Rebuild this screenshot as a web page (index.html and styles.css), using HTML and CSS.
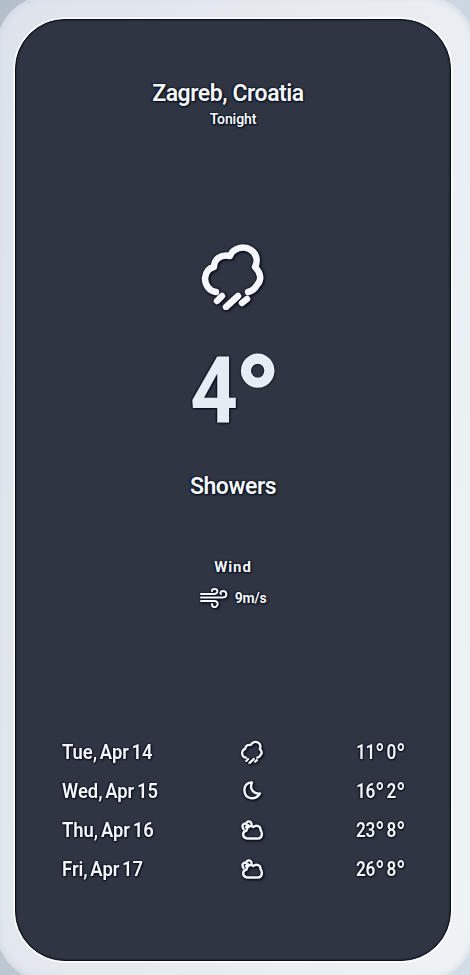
FILE: index.html
```html
<!DOCTYPE html>
<html lang="en">
<head>
<meta charset="utf-8">
<title>Weather</title>
<link rel="stylesheet" href="styles.css">
</head>
<body>
<svg width="0" height="0" class="defs">
  <symbol id="shower" viewBox="0 0 64 68">
    <path d="M15 50C8 49 4 43 4 36C5 29 8 26 13 25C13 17 20 12 29 14C32 6 43 3 50 8C56 12 57 19 54 25C60 31 61 38 56 43C54 47 51 49 47 50M21 54L16 59M37 54L25 65M46 57L41 61"/>
  </symbol>
  <symbol id="moon" viewBox="0 0 24 24">
    <path d="M12 3.500C7 3 4 7 4.500 12C5 20 15 22 20 14.500C14 15.500 9 10 12 3.500Z"/>
  </symbol>
  <symbol id="cloudy" viewBox="0 0 24 22">
    <path d="M7 19.500C2 18.500 2 12.500 6.500 11.500C7 7 11 6 13.500 8C16 5.500 21 7 20.500 11C23 14 22 19.500 18 19.500ZM3.500 10C1 6 4 4 6 5C7 1 12 2 11.500 5.500M6 8L8 6"/>
  </symbol>
</svg>
<div class="device">
<main class="screen">
  <header class="place">
    <h1><span>Zagreb, Croatia</span></h1>
    <p><span>Tonight</span></p>
  </header>
  <section class="now">
    <svg class="now-icon"><use href="#shower"/></svg>
    <div class="temp"><span class="num">4</span><span class="deg">°</span></div>
    <h2><span>Showers</span></h2>
  </section>
  <section class="wind">
    <h3><span>Wind</span></h3>
    <div class="wind-row">
      <svg viewBox="0 0 28 22"><path d="M1 7H14C19 7 18 1 14 2C12 2 12 4 12 4M1 10.500H23C28 10 27 4 23 4C20 4 20 7 21 7M1 14H15C20 15 17 21 14 20C12 20 12 18 12 17"/></svg>
      <span class="speed">9m/s</span>
    </div>
  </section>
  <ul class="days">
    <li><span class="date">Tue, Apr 14</span><svg class="i-shower"><use href="#shower"/></svg><span class="range">11<i>°</i> 0<i>°</i></span></li>
    <li><span class="date">Wed, Apr 15</span><svg><use href="#moon"/></svg><span class="range">16<i>°</i> 2<i>°</i></span></li>
    <li><span class="date">Thu, Apr 16</span><svg><use href="#cloudy"/></svg><span class="range">23<i>°</i> 8<i>°</i></span></li>
    <li><span class="date">Fri, Apr 17</span><svg><use href="#cloudy"/></svg><span class="range">26<i>°</i> 8<i>°</i></span></li>
  </ul>
</main>
</div>
</body>
</html>
```
FILE: styles.css
```css
* { box-sizing: border-box; margin: 0; padding: 0; }
body { width: 470px; height: 975px; overflow: hidden; font-family: Roboto, "Liberation Sans", sans-serif; color: #f4f8fc; background: linear-gradient(100deg, #b4bec9, #d3dde7 90%); }
.defs { display: block; height: 0; }
.device { margin: -5px 0 0 -4px; width: 480px; height: 987px; padding: 24px 25px 20px 19px; border-radius: 54px; background: linear-gradient(100deg, #dde3eb, #e7ebf0 50%, #eff3f6); box-shadow: inset 0 0 8px #c9d2dd; }
.screen { display: flex; flex-direction: column; height: 942px; width: 436px; border-radius: 50px; background: #303543; border: 1px solid #080d19; box-shadow: 0 0 0 1.500px #fff, inset 0 0 2px #0b1020; text-shadow: 0 0 2px #070c1b, 1px 1px 2px #070c1b, -1px 0 2px #070c1b; padding: 58px 46px 0; }
svg { fill: none; stroke: #f4f8fc; stroke-linecap: round; stroke-linejoin: round; filter: drop-shadow(0 0 1px #070c1b) drop-shadow(1px 1px 1px #070c1b); }
h1, h2, h3, p { text-align: center; font-weight: 600; white-space: nowrap; }
h1 { font-size: 23px; line-height: 31px; margin-right: 10px; }
h1 span { letter-spacing: -.45px; }
.place { height: 164px; }
.place p { font-size: 14px; line-height: 20px; letter-spacing: -.1px; }
.now { display: flex; flex-direction: column; align-items: center; height: 314px; }
.now-icon { width: 64px; height: 68px; stroke-width: 6.500; }
.temp { display: flex; height: 120px; margin-top: 21px; font-weight: 700; line-height: 120px; color: #e5edf4; width: 86px; }
.num { font-size: 93px; width: 47px; transform: scaleX(.9); transform-origin: left; }
.deg { font-size: 122px; width: 39px; line-height: 142px; margin-left: -3px; -webkit-text-stroke: 1.500px #edf3f8; }
h2 { font-size: 23px; line-height: 30px; margin-top: 21px; letter-spacing: -.45px; }
.wind { height: 176px; }
h3 { font-size: 15px; line-height: 22px; font-weight: 700; letter-spacing: .9px; }
.wind-row { display: flex; justify-content: center; align-items: center; gap: 7px; margin-top: 9px; height: 22px; }
.wind-row svg { width: 28px; height: 22px; stroke-width: 2; }
.speed { font-size: 14px; font-weight: 700; line-height: 22px; letter-spacing: -.2px; }
.days { list-style: none; }
.days li { display: grid; grid-template-columns: 178px 24px 1fr; align-items: center; height: 39px; font-size: 20px; font-weight: 600; white-space: nowrap; }
.date { transform: scaleX(.92); transform-origin: left; word-spacing: -2px; }
.days svg { width: 24px; height: 24px; stroke-width: 2.400; }
.days .i-shower { stroke-width: 6.500; }
.range { justify-self: end; margin-right: -1px; transform: scaleX(.86); transform-origin: right; letter-spacing: -.4px; word-spacing: -2px; }
.range i { font-style: normal; font-size: 29px; line-height: 0; vertical-align: -6px; }
```
